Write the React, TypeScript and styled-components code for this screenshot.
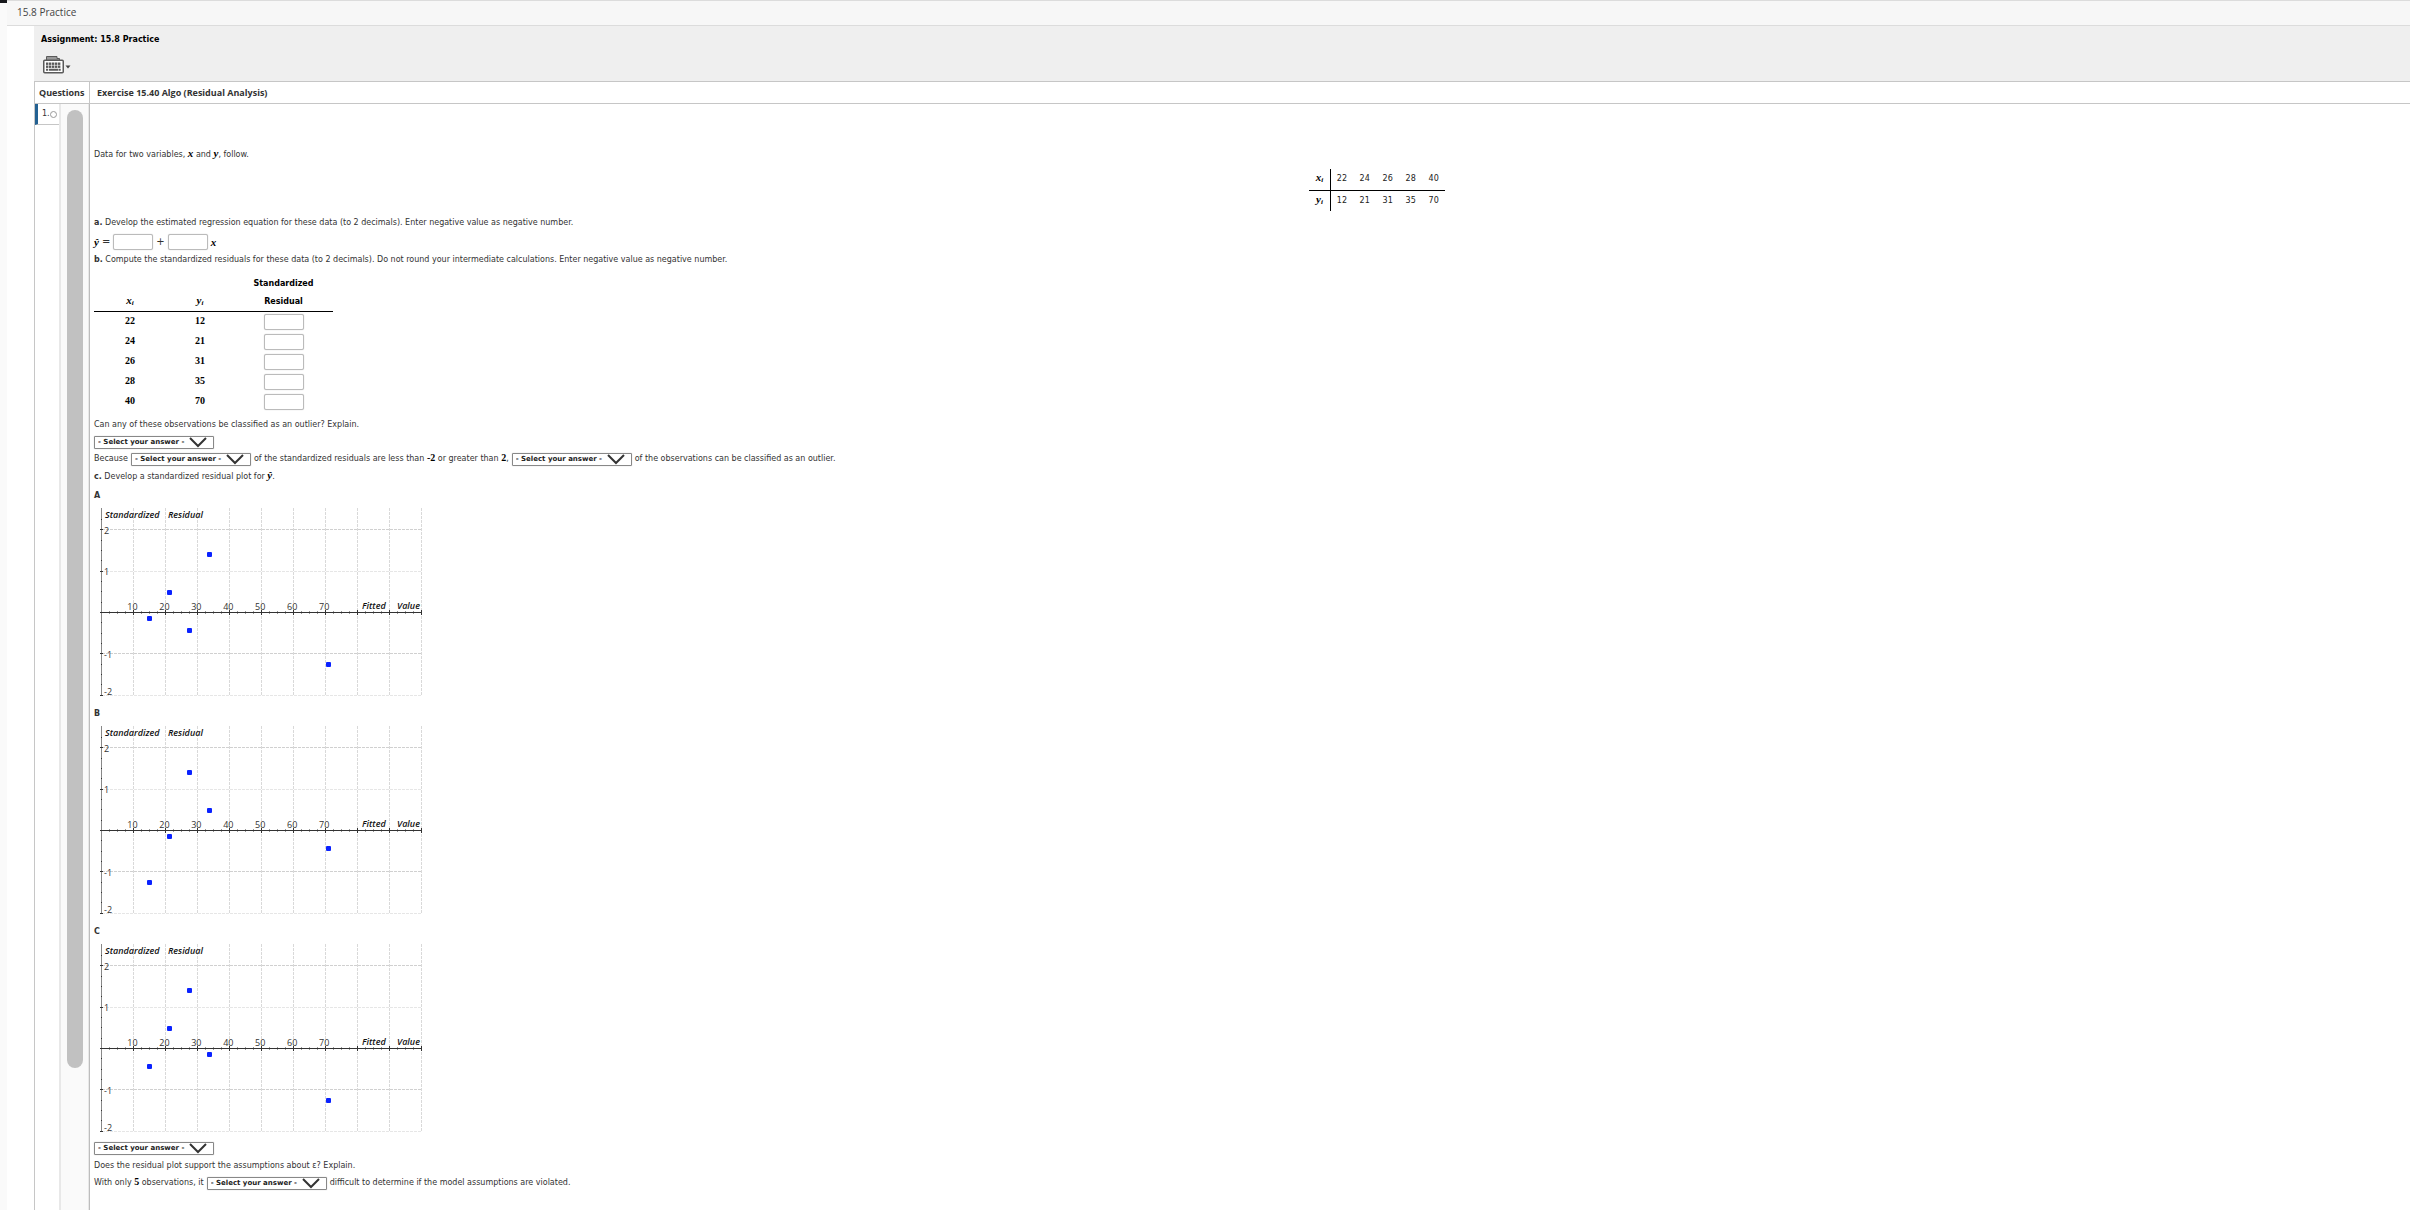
import React from 'react';
import styled, { createGlobalStyle } from 'styled-components';

const sans = `'DejaVu Sans', Verdana, sans-serif`;
const heading = `'Open Sans', sans-serif`;
const serif = `'Liberation Serif', 'Times New Roman', serif`;

const GlobalStyle = createGlobalStyle`
  *, *::before, *::after { box-sizing: border-box; }
  html, body { margin: 0; background: #fff; }
  body { font: 8px/18px ${sans}; color: #333; }
  h1, h2, h3, p, figure { margin: 0; font-weight: inherit; }
`;

const Page = styled.div`
  display: grid;
  grid-template-columns: 7px minmax(0, 1fr);
  min-height: 100vh;
`;

const EdgeStrip = styled.div`
  background: #fafafa;
  border-top: 3px solid #17181c;
`;

const Shell = styled.div`
  display: flex;
  flex-direction: column;
`;

const TopBar = styled.header`
  height: 26px;
  padding: 0 10px;
  background: #f7f7f7;
  border-top: 1px solid #dcdcdc;
  border-bottom: 1px solid #dcdcdc;
  font: 10px/23px ${heading};
  color: #444;
`;

const Workspace = styled.main`
  flex: 1;
  display: flex;
  flex-direction: column;
  margin-left: 27px;
`;

const AssignmentBar = styled.section`
  display: flex;
  flex-direction: column;
  align-items: flex-start;
  height: 55px;
  padding: 5px 7px 0;
  background: #efefef;
`;

const AssignmentTitle = styled.h1`
  font-size: 8px;
  font-weight: bold;
  color: #000;
`;

const ToolButton = styled.button`
  display: flex;
  align-items: center;
  margin-top: 6px;
  padding: 0 2px;
  border: 0;
  background: none;
  cursor: pointer;
`;

const Columns = styled.div`
  flex: 1;
  display: grid;
  grid-template-columns: 55px minmax(0, 1fr);
  grid-template-rows: 22px 1fr;
  border-top: 1px solid #c6c6c6;
  border-left: 1px solid #c6c6c6;
`;

const ColumnTitle = styled.h2<{ $divided?: boolean }>`
  padding-left: ${(p) => (p.$divided ? 4 : 7)}px;
  border-bottom: 1px solid #c6c6c6;
  border-right: ${(p) => (p.$divided ? '1px solid #c6c6c6' : '0')};
  font: bold 9px/21px ${heading};
  color: #333;
  white-space: nowrap;
`;

const QuestionRail = styled.aside`
  display: grid;
  grid-template-columns: 24px 1fr;
  border-right: 1px solid #bdbdbd;
`;

const QuestionLink = styled.a`
  display: flex;
  align-items: center;
  height: 21px;
  padding-left: 4px;
  border-left: 3px solid #236192;
  border-bottom: 1px solid #c6c6c6;
  color: #333;
  text-decoration: none;
`;

const StatusDot = styled.span`
  width: 7px;
  height: 7px;
  flex: none;
  border: 1px solid #999;
  border-radius: 50%;
`;

const ScrollTrack = styled.div`
  display: flex;
  flex-direction: column;
  align-items: center;
  padding-top: 6px;
  background: #fafafa;
  border: solid #e8e8e8;
  border-width: 0 1px 0 2px;

  &::after { content: ''; flex: 13 0 0; }
`;

const ScrollThumb = styled.div`
  flex: 88 0 0;
  width: 16px;
  border-radius: 8px;
  background: #c1c1c1;
`;

const Exercise = styled.article`
  padding: 42px 4px 18px;
`;

const Line = styled.p`
  height: 18px;
  white-space: nowrap;
`;

const ControlLine = styled.div<{ $tall?: boolean }>`
  display: flex;
  align-items: center;
  height: ${(p) => (p.$tall ? 19 : 17)}px;
  gap: 3px;
  white-space: nowrap;
`;

const MathVar = styled.i`
  font-family: ${serif};
  font-size: 11px;
  font-weight: bold;
  line-height: 10px;
  color: #000;

  sub { font-size: 7px; line-height: 0; vertical-align: -1px; }
`;

const MathNumber = styled.span`
  font-family: ${serif};
  font-size: 10px;
  font-weight: bold;
  line-height: 10px;
  color: #000;
`;

const Operator = styled.span`
  font-size: 10px;
`;

const AnswerInput = styled.input`
  display: block;
  width: 40px;
  height: 16px;
  padding: 0 2px;
  border: 1px solid #bbb;
  border-radius: 2px;
  box-shadow: 0 0 1px #bbb;
  background: #fff;
  font: 8px ${sans};
`;

const DataWrap = styled.div`
  display: flex;
  justify-content: center;
  height: 50px;
  padding: 5px 0 3px 11%;
`;

const DataTable = styled.table`
  border-collapse: collapse;
  color: #222;

  th, td { height: 21px; padding: 0; text-align: center; }
  th { width: 21px; border-right: 1px solid #000; }
  td { width: 23px; }
  tr:first-child > * { border-bottom: 1px solid #000; }
`;

const ResidualTable = styled.table`
  margin: 6px 0 4px;
  border-collapse: collapse;
  table-layout: fixed;
  width: 239px;

  th, td { padding: 0; text-align: center; vertical-align: bottom; }
  th { color: #000; border-bottom: 1px solid #000; height: 36px; }
  th:nth-child(1) { width: 72px; }
  th:nth-child(2) { width: 68px; }
  td { height: 20px; vertical-align: middle; line-height: 16px; }
  input { margin: 0 auto; }
`;

const SelectBox = styled.span`
  position: relative;
  display: inline-flex;
  width: 120px;

  svg { position: absolute; right: 7px; top: 1px; pointer-events: none; }
`;

const SelectControl = styled.select`
  appearance: none;
  width: 100%;
  height: 13px;
  padding: 0 3px;
  border: 1px solid #888;
  border-radius: 1px;
  box-shadow: 0 0 1px #aaa;
  background: #fff;
  color: #222;
  font: bold 7px/11px ${sans};
`;

const PlotFigure = styled.figure`
  height: 218px;

  figcaption { height: 18px; line-height: 20px; font-weight: bold; }
  svg { display: block; }
`;

const AxisName = styled.text`
  font: italic 600 9px ${heading};
  fill: #111;
`;

const TickLabel = styled.text`
  font: 9px ${heading};
  fill: #333;
`;

function AnswerSelect({ label }: { label: string }) {
  return (
    <SelectBox>
      <SelectControl aria-label={label}>
        <option>- Select your answer -</option>
      </SelectControl>
      <svg width="18" height="11" viewBox="0 0 18 11" fill="none" stroke="#333" strokeWidth="2">
        <path d="M1 1 L9 9 L17 1" />
      </svg>
    </SelectBox>
  );
}

function YHat() {
  return <MathVar>ŷ</MathVar>;
}

function KeyboardIcon() {
  const keys = [3, 6, 9, 12, 15];
  return (
    <svg width="28" height="19" viewBox="0 0 28 19" aria-hidden="true">
      <path d="M3.5 5 V1.5 H14 V3.5 H16.5 V5" fill="#999" stroke="#5a5a5a" />
      <rect x="0.75" y="5.25" width="19.5" height="12.5" rx="1" fill="#fff" stroke="#5a5a5a" strokeWidth="1.5" />
      {keys.map((x) => (
        <g key={x} fill="#5a5a5a">
          <rect x={x} y="7.5" width="2.4" height="2.4" />
          <rect x={x} y="10.5" width="2.4" height="2.4" />
        </g>
      ))}
      <path d="M3 14.8 h2.2 M6 14.8 h9 M15.5 14.8 h2.2" stroke="#5a5a5a" strokeWidth="2" />
      <path d="M22.5 10.5 h5 l-2.5 3 z" fill="#444" />
    </svg>
  );
}

const FITTED = [15.2, 21.3, 27.7, 34, 71.3];
const ORIGIN_X = 7.5;
const ORIGIN_Y = 108.5;
const toX = (v: number) => ORIGIN_X + v * 3.195;
const toY = (v: number) => ORIGIN_Y - v * 41.3;
const snap = (n: number) => Math.floor(n) + 0.5;
const range = (from: number, to: number) => Array.from({ length: to - from + 1 }, (_, i) => from + i);

function ResidualPlot({ name, residuals }: { name: string; residuals: number[] }) {
  return (
    <PlotFigure>
      <figcaption>{name}</figcaption>
      <svg width="332" height="200" role="img" aria-label={`Residual plot ${name}`}>
        <g stroke="#d9d9d9" strokeDasharray="3 1">
          {range(1, 10).map((i) => (
            <line key={i} x1={snap(toX(i * 10))} x2={snap(toX(i * 10))} y1="4" y2="191" />
          ))}
          {[2, 1, -1, -2].map((v) => (
            <line key={v} x1="8" x2="327" y1={snap(toY(v))} y2={snap(toY(v))} stroke={v === 1 || v === -2 ? '#e6e6e6' : '#d0d0d0'} />
          ))}
        </g>
        <g stroke="#333">
          <line x1="7.5" x2="7.5" y1="4" y2="191" stroke="#888" />
          <line x1="7" x2="328" y1={ORIGIN_Y} y2={ORIGIN_Y} />
          {range(1, 40).map((i) => {
            const reach = i % 4 === 0 ? 2.5 : 1;
            return <line key={i} x1={snap(toX(i * 2.5))} x2={snap(toX(i * 2.5))} y1={ORIGIN_Y - reach} y2={ORIGIN_Y + reach} />;
          })}
          {range(-8, 9).map((i) => (
            <line key={i} x1={i % 4 === 0 ? 6 : 7} x2={i % 4 === 0 ? 9 : 8} y1={snap(toY(i / 4))} y2={snap(toY(i / 4))} />
          ))}
        </g>
        {range(1, 7).map((i) => (
          <TickLabel key={i} x={toX(i * 10) - 1} y="106" textAnchor="middle">{i * 10}</TickLabel>
        ))}
        {[2, 1, -1].map((v) => (
          <TickLabel key={v} x="10" y={toY(v) + 4}>{v}</TickLabel>
        ))}
        <TickLabel x="10" y="191">-2</TickLabel>
        <AxisName x="11" y="14">Standardized</AxisName>
        <AxisName x="74" y="14">Residual</AxisName>
        <AxisName x="268" y="105">Fitted</AxisName>
        <AxisName x="303" y="105">Value</AxisName>
        {residuals.map((r, i) => (
          <rect key={i} x={Math.round(toX(FITTED[i])) - 3} y={Math.round(toY(r)) - 3} width="5" height="5" rx="1" fill="#0a22ff" />
        ))}
      </svg>
    </PlotFigure>
  );
}

const XS = [22, 24, 26, 28, 40];
const YS = [12, 21, 31, 35, 70];

const PLOTS = [
  { name: 'A', residuals: [-0.16, 0.48, -0.45, 1.39, -1.27] },
  { name: 'B', residuals: [-1.27, -0.16, 1.39, 0.48, -0.45] },
  { name: 'C', residuals: [-0.45, 0.48, 1.39, -0.16, -1.27] },
];

export default function App() {
  return (
    <Page>
      <GlobalStyle />
      <EdgeStrip />
      <Shell>
        <TopBar>15.8 Practice</TopBar>
        <Workspace>
          <AssignmentBar>
            <AssignmentTitle>Assignment: 15.8 Practice</AssignmentTitle>
            <ToolButton type="button" aria-label="Keyboard tools">
              <KeyboardIcon />
            </ToolButton>
          </AssignmentBar>
          <Columns>
            <ColumnTitle $divided>Questions</ColumnTitle>
            <ColumnTitle>Exercise 15.40 Algo (Residual Analysis)</ColumnTitle>
            <QuestionRail>
              <nav>
                <QuestionLink href="#question-1">1.<StatusDot /></QuestionLink>
              </nav>
              <ScrollTrack>
                <ScrollThumb />
              </ScrollTrack>
            </QuestionRail>
            <Exercise id="question-1">
              <Line>Data for two variables, <MathVar>x</MathVar> and <MathVar>y</MathVar>, follow.</Line>
              <DataWrap>
                <DataTable>
                  <tbody>
                    <tr>
                      <th scope="row"><MathVar>x<sub>i</sub></MathVar></th>
                      {XS.map((v) => <td key={v}>{v}</td>)}
                    </tr>
                    <tr>
                      <th scope="row"><MathVar>y<sub>i</sub></MathVar></th>
                      {YS.map((v) => <td key={v}>{v}</td>)}
                    </tr>
                  </tbody>
                </DataTable>
              </DataWrap>
              <Line><b>a.</b> Develop the estimated regression equation for these data (to 2 decimals). Enter negative value as negative number.</Line>
              <ControlLine $tall>
                <YHat />
                <Operator>=</Operator>
                <AnswerInput aria-label="Intercept" />
                <Operator>+</Operator>
                <AnswerInput aria-label="Slope" />
                <MathVar>x</MathVar>
              </ControlLine>
              <Line><b>b.</b> Compute the standardized residuals for these data (to 2 decimals). Do not round your intermediate calculations. Enter negative value as negative number.</Line>
              <ResidualTable>
                <thead>
                  <tr>
                    <th scope="col"><MathVar>x<sub>i</sub></MathVar></th>
                    <th scope="col"><MathVar>y<sub>i</sub></MathVar></th>
                    <th scope="col">Standardized<br />Residual</th>
                  </tr>
                </thead>
                <tbody>
                  {XS.map((x, i) => (
                    <tr key={x}>
                      <td><MathNumber>{x}</MathNumber></td>
                      <td><MathNumber>{YS[i]}</MathNumber></td>
                      <td><AnswerInput aria-label={`Standardized residual for x = ${x}`} /></td>
                    </tr>
                  ))}
                </tbody>
              </ResidualTable>
              <Line>Can any of these observations be classified as an outlier? Explain.</Line>
              <ControlLine><AnswerSelect label="Outlier conclusion" /></ControlLine>
              <ControlLine>
                <span>Because</span>
                <AnswerSelect label="How many residuals" />
                <span>of the standardized residuals are less than <MathNumber>-2</MathNumber> or greater than <MathNumber>2</MathNumber>,</span>
                <AnswerSelect label="How many observations" />
                <span>of the observations can be classified as an outlier.</span>
              </ControlLine>
              <Line><b>c.</b> Develop a standardized residual plot for <YHat />.</Line>
              {PLOTS.map((plot) => <ResidualPlot key={plot.name} {...plot} />)}
              <ControlLine><AnswerSelect label="Residual plot choice" /></ControlLine>
              <Line>Does the residual plot support the assumptions about ε? Explain.</Line>
              <ControlLine>
                <span>With only <MathNumber>5</MathNumber> observations, it</span>
                <AnswerSelect label="Difficulty of the conclusion" />
                <span>difficult to determine if the model assumptions are violated.</span>
              </ControlLine>
            </Exercise>
          </Columns>
        </Workspace>
      </Shell>
    </Page>
  );
}
